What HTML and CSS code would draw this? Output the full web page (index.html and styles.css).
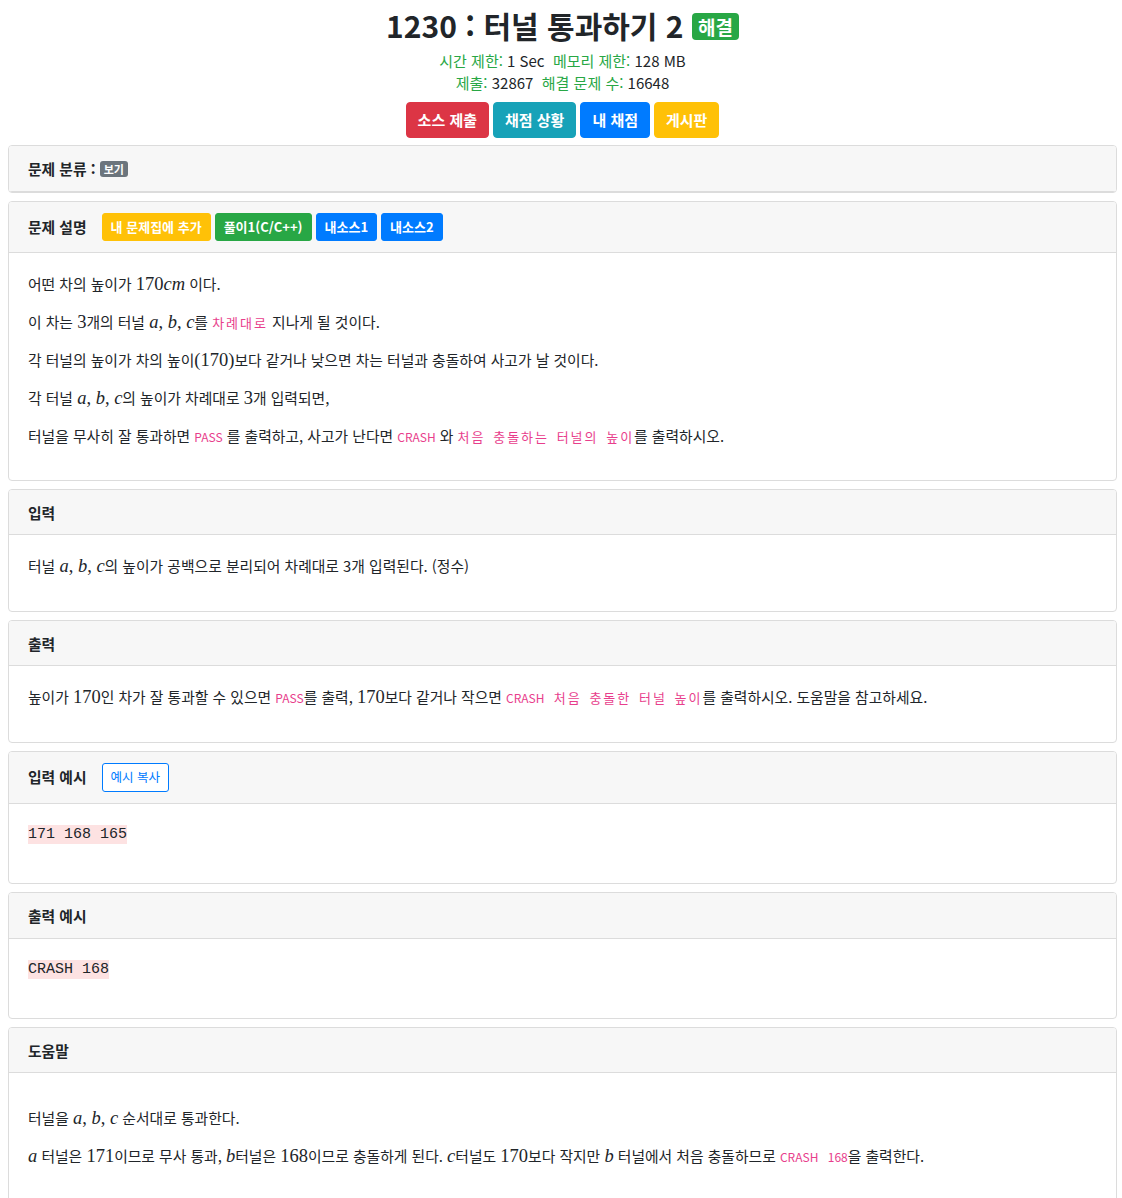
FILE: index.html
```html
<!DOCTYPE html>
<html lang="ko">
<head>
<meta charset="utf-8">
<title>1230 : 터널 통과하기 2</title>
<link rel="stylesheet" href="styles.css">
</head>
<body>
<div class="page">
  <header class="top">
    <h1 class="title">1230 : 터널 통과하기 2 <span class="badge badge-success">해결</span></h1>
    <div class="info">
      <div><span class="lbl">시간 제한:</span> 1 Sec&nbsp; <span class="lbl">메모리 제한:</span> 128 MB</div>
      <div><span class="lbl">제출:</span> 32867&nbsp; <span class="lbl">해결 문제 수:</span> 16648</div>
    </div>
    <div class="actions">
      <a class="btn btn-danger">소스 제출</a>
      <a class="btn btn-info">채점 상황</a>
      <a class="btn btn-primary">내 채점</a>
      <a class="btn btn-warning">게시판</a>
    </div>
  </header>

  <section class="card">
    <div class="card-header only">문제 분류 : <span class="badge badge-secondary">보기</span></div>
  </section>

  <section class="card">
    <div class="card-header tall">
      <span class="htitle">문제 설명</span>
      <a class="btn btn-sm btn-warning">내 문제집에 추가</a>
      <a class="btn btn-sm btn-success">풀이1(C/C++)</a>
      <a class="btn btn-sm btn-primary">내소스1</a>
      <a class="btn btn-sm btn-primary">내소스2</a>
    </div>
    <div class="card-body">
      <p>어떤 차의 높이가 <span class="math"><span class="mn">170</span><i>cm</i></span> 이다.</p>
      <p>이 차는 <span class="math"><span class="mn">3</span></span>개의 터널 <span class="math"><i>a</i>, <i>b</i>, <i>c</i></span>를 <code class="ko">차례대로</code> 지나게 될 것이다.</p>
      <p>각 터널의 높이가 차의 높이<span class="math"><span class="mn">(170)</span></span>보다 같거나 낮으면 차는 터널과 충돌하여 사고가 날 것이다.</p>
      <p>각 터널 <span class="math"><i>a</i>, <i>b</i>, <i>c</i></span>의 높이가 차례대로 <span class="math"><span class="mn">3</span></span>개 입력되면,</p>
      <p>터널을 무사히 잘 통과하면 <code>PASS</code> 를 출력하고, 사고가 난다면 <code>CRASH</code> 와 <code class="ko">처음 충돌하는 터널의 높이</code>를 출력하시오.</p>
    </div>
  </section>

  <section class="card">
    <div class="card-header">입력</div>
    <div class="card-body">
      <p>터널 <span class="math"><i>a</i>, <i>b</i>, <i>c</i></span>의 높이가 공백으로 분리되어 차례대로 3개 입력된다. (정수)</p>
    </div>
  </section>

  <section class="card">
    <div class="card-header">출력</div>
    <div class="card-body">
      <p>높이가 <span class="math"><span class="mn">170</span></span>인 차가 잘 통과할 수 있으면 <code>PASS</code>를 출력, <span class="math"><span class="mn">170</span></span>보다 같거나 작으면 <code class="wide">CRASH <span class="ko">처음 충돌한 터널 높이</span></code>를 출력하시오. 도움말을 참고하세요.</p>
    </div>
  </section>

  <section class="card">
    <div class="card-header tall">
      <span class="htitle">입력 예시</span>
      <a class="btn btn-sm btn-outline">예시 복사</a>
    </div>
    <div class="card-body">
      <pre class="sample"><span>171 168 165</span></pre>
    </div>
  </section>

  <section class="card">
    <div class="card-header">출력 예시</div>
    <div class="card-body">
      <pre class="sample"><span>CRASH 168</span></pre>
    </div>
  </section>

  <section class="card">
    <div class="card-header">도움말</div>
    <div class="card-body">
      <p class="empty"></p>
      <p>터널을 <span class="math"><i>a</i>, <i>b</i>, <i>c</i></span> 순서대로 통과한다.</p>
      <p><span class="math"><i>a</i></span> 터널은 <span class="math"><span class="mn">171</span></span>이므로 무사 통과, <span class="math"><i>b</i></span>터널은 <span class="math"><span class="mn">168</span></span>이므로 충돌하게 된다. <span class="math"><i>c</i></span>터널도 <span class="math"><span class="mn">170</span></span>보다 작지만 <span class="math"><i>b</i></span> 터널에서 처음 충돌하므로 <code class="wide">CRASH 168</code>을 출력한다.</p>
    </div>
  </section>
</div>
</body>
</html>
```

FILE: styles.css
```css
* { box-sizing: border-box; }
html, body { margin: 0; padding: 0; background: #fff; }
body {
  font-family: "Noto Sans CJK KR", "Noto Sans", sans-serif;
  font-size: 14.8px;
  line-height: 21.5px;
  color: #212529;
}
.page { padding: 0 5px 40px 8px; }

.top { text-align: center; padding-top: 5px; }
.title {
  margin: 0;
  font-size: 30px;
  line-height: 40px;
  font-weight: 700;
  color: #212529;
}
.badge {
  display: inline-block;
  font-weight: 700;
  color: #fff;
  border-radius: 4px;
  vertical-align: middle;
  white-space: nowrap;
}
.title .badge {
  font-size: 19px;
  line-height: 25px;
  padding: 1px 6px 1px;
  position: relative;
  top: -3px;
}
.badge-success { background: #28a745; }
.badge-secondary {
  background: #6c757d;
  font-size: 11px;
  line-height: 14px;
  padding: 1px 4px 1px;
  border-radius: 3px;
}
.info {
  margin-top: 5px;
  font-size: 15px;
  line-height: 22px;
}
.lbl { color: #28a745; }

.actions {
  margin-top: 8px;
  display: flex;
  justify-content: center;
  gap: 4px;
}
.btn {
  display: inline-block;
  font-weight: 700;
  color: #fff;
  border: 1px solid transparent;
  border-radius: 4px;
  font-size: 15px;
  line-height: 22px;
  padding: 6px 11px;
  text-decoration: none;
  white-space: nowrap;
}
.btn-danger { background: #dc3545; border-color: #dc3545; }
.btn-info { background: #17a2b8; border-color: #17a2b8; }
.btn-primary { background: #007bff; border-color: #007bff; }
.btn-warning { background: #ffc107; border-color: #ffc107; }
.btn-success { background: #28a745; border-color: #28a745; }
.btn-sm {
  font-size: 13px;
  line-height: 18px;
  padding: 4px 8px;
  border-radius: 3px;
}
.btn-outline {
  background: #fff;
  color: #007bff;
  border-color: #007bff;
  font-weight: 400;
  font-size: 12.5px;
  padding-top: 4.5px;
  padding-bottom: 4.5px;
}

.card {
  margin-top: 7px;
  border: 1px solid #dcdcdc;
  border-radius: 4px;
  background: #fff;
  overflow: hidden;
}
.card + .card { margin-top: 8px; }
.card-header {
  background: #f7f7f7;
  border-bottom: 1px solid #dcdcdc;
  padding: 12px 19px 11px;
  font-weight: 700;
  font-size: 14.8px;
  line-height: 21.5px;
}
.card-header.only { padding-top: 12px; padding-bottom: 11px; }
.card-header.tall {
  display: flex;
  align-items: center;
  gap: 4px;
  padding-top: 11px;
  padding-bottom: 11px;
}
.card-header.tall .htitle { margin-right: 11px; }
.card-header .badge { vertical-align: 1px; }

.card-body { padding: 20px 19px 17.4px 19px; }
.card-body p { margin: 0 0 16.5px; }
.card-body p.empty { margin: 0 0 14px; height: 0; }

.math {
  font-family: "Liberation Serif", "DejaVu Serif", serif;
  font-size: 18.5px;
  line-height: 1;
}
.math i { font-style: italic; }
.mn { font-style: normal; }

code {
  font-family: "Noto Sans CJK KR", "Noto Sans", sans-serif;
  font-size: 12px;
  line-height: 1;
  color: #e83e8c;
}
code.ko, code .ko {
  font-size: 13px;
  letter-spacing: 2px;
  word-spacing: 2px;
}
code.wide { word-spacing: 6px; }

.sample {
  margin: 0 0 20px;
  font-family: "Liberation Mono", "DejaVu Sans Mono", monospace;
  font-size: 15px;
  line-height: 22px;
  color: #212529;
}
.sample span { background: #fde2e2; padding: 1px 0; }
```
